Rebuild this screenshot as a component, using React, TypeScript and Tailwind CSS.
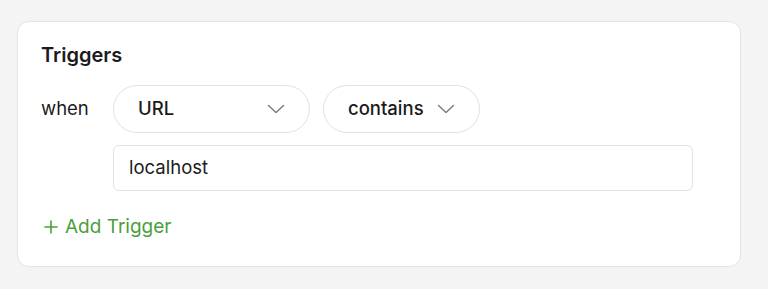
import React from "react";

function Chevron() {
  return (
    <svg width="18" height="10" viewBox="0 0 18 10" fill="none" className="shrink-0">
      <path d="M1.5 1.5L9 8.5L16.5 1.5" stroke="#808080" strokeWidth="1.6" strokeLinecap="round" strokeLinejoin="round" />
    </svg>
  );
}

export default function App() {
  return (
    <div className="min-h-[289px] w-full bg-[#f4f4f4] px-[17px] pt-[21px] pb-[22px]" style={{ fontFamily: "Inter, 'Noto Sans', sans-serif" }}>
      <div className="w-[724px] h-[246px] rounded-[12px] border border-[#e4e4e4] bg-white pl-[23px] pt-[19px]">
        <div className="text-[20px] leading-[28px] font-semibold text-[#1b1b1b]">Triggers</div>
        <div className="mt-[16px] flex items-start">
          <div className="w-[72px] h-[48px] flex items-center text-[18.5px] text-[#1b1b1b]">when</div>
          <div className="flex flex-col gap-[12px]">
            <div className="flex gap-[13px]">
              <div className="w-[197px] h-[48px] rounded-full border border-[#e2e2e2] flex items-center justify-between pl-[24px] pr-[24px] text-[18.5px] font-medium text-[#1b1b1b]">
                <span>URL</span>
                <Chevron />
              </div>
              <div className="w-[157px] h-[48px] rounded-full border border-[#e2e2e2] flex items-center justify-between pl-[24px] pr-[24px] text-[18.5px] font-medium text-[#1b1b1b]">
                <span>contains</span>
                <Chevron />
              </div>
            </div>
            <div className="w-[580px] h-[46px] rounded-[6px] border border-[#e2e2e2] flex items-center pl-[15px] text-[18.5px] text-[#1b1b1b]">
              localhost
            </div>
          </div>
        </div>
        <div className="mt-[24px] flex items-center gap-[7px] text-[19px] text-[#4aa03a] leading-[24px]">
          <svg width="14" height="14" viewBox="0 0 14 14" fill="none" className="ml-[3px]">
            <path d="M7 1V13M1 7H13" stroke="#4aa03a" strokeWidth="1.6" strokeLinecap="round" />
          </svg>
          <span>Add Trigger</span>
        </div>
      </div>
    </div>
  );
}
